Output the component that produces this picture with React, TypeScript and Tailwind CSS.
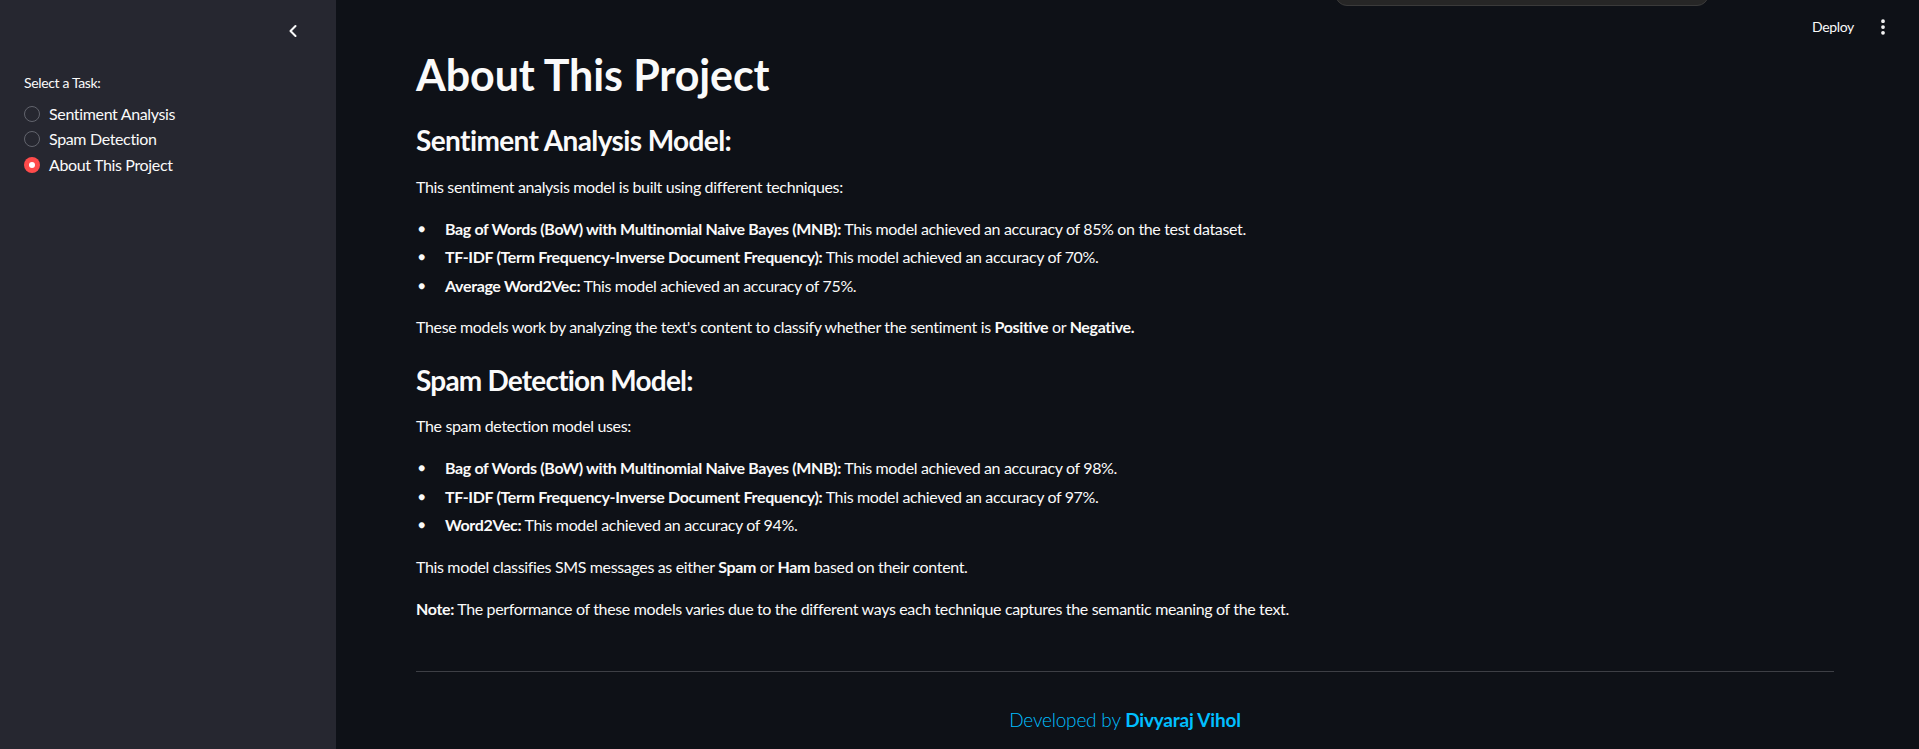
import React from "react";
import { ChevronLeft, EllipsisVertical } from "lucide-react";

const font = { fontFamily: "Lato, 'Noto Sans', sans-serif" };

function Radio({ label, checked }: { label: string; checked?: boolean }) {
  return (
    <div className="flex items-center h-[25.5px]">
      {checked ? (
        <span className="w-4 h-4 rounded-full bg-[#ff4b4b] flex items-center justify-center">
          <span className="w-[6px] h-[6px] rounded-full bg-white" />
        </span>
      ) : (
        <span className="w-4 h-4 rounded-full border border-[#62646d]" />
      )}
      <span className="ml-[9px] text-[16px] leading-[24px] text-[#fafafa]">{label}</span>
    </div>
  );
}

function Bullet({ children }: { children: React.ReactNode }) {
  return (
    <li className="flex h-[24px] leading-[24px] text-[16px]">
      <span className="w-[29px] pl-[2px] text-[12px]">●</span>
      <span>{children}</span>
    </li>
  );
}

export default function App() {
  return (
    <div className="relative flex h-[749px] w-[1919px] overflow-hidden bg-[#0e1117] text-[#fafafa] tracking-[-0.35px]" style={font}>
      <aside className="w-[336px] shrink-0 bg-[#262730] flex flex-col">
        <div className="flex justify-end pr-[33px] pt-[21px]">
          <ChevronLeft size={20} strokeWidth={2.5} className="text-[#fafafa]" />
        </div>
        <div className="pl-[24px] pt-[32px]">
          <div className="text-[14px] leading-[20px] text-[#fafafa]">Select a Task:</div>
          <div className="mt-[8px] flex flex-col">
            <Radio label="Sentiment Analysis" />
            <Radio label="Spam Detection" />
            <Radio label="About This Project" checked />
          </div>
        </div>
      </aside>

      <main className="relative flex-1 pl-[80px] pr-[85px]">
        <div className="absolute left-[999px] top-[-20px] w-[374px] h-[26px] rounded-b-[12px] bg-[#262626] border border-[#3a3a3a]" />
        <div className="absolute right-[26px] top-[17px] flex items-center">
          <span className="text-[14px] leading-[20px] text-[#fafafa]">Deploy</span>
          <EllipsisVertical size={20} strokeWidth={2.5} className="ml-[19px] text-[#fafafa]" />
        </div>

        <div className="pt-[49px]">
          <h1 className="text-[43px] leading-[51px] font-bold tracking-[-0.1px]">About This Project</h1>
          <h2 className="mt-[24px] text-[28px] leading-[33.6px] font-bold tracking-[-0.6px]">Sentiment Analysis Model:</h2>
          <p className="mt-[17px] text-[16px] leading-[24px]">This sentiment analysis model is built using different techniques:</p>
          <ul className="mt-[18px] flex flex-col gap-[4.5px]">
            <Bullet><b>Bag of Words (BoW) with Multinomial Naive Bayes (MNB):</b> This model achieved an accuracy of 85% on the test dataset.</Bullet>
            <Bullet><b>TF-IDF (Term Frequency-Inverse Document Frequency):</b> This model achieved an accuracy of 70%.</Bullet>
            <Bullet><b>Average Word2Vec:</b> This model achieved an accuracy of 75%.</Bullet>
          </ul>
          <p className="mt-[17px] text-[16px] leading-[24px]">These models work by analyzing the text's content to classify whether the sentiment is <b>Positive</b> or <b>Negative.</b></p>

          <h2 className="mt-[25px] text-[28px] leading-[33.6px] font-bold tracking-[-0.8px]">Spam Detection Model:</h2>
          <p className="mt-[17px] text-[16px] leading-[24px]">The spam detection model uses:</p>
          <ul className="mt-[18px] flex flex-col gap-[4.5px]">
            <Bullet><b>Bag of Words (BoW) with Multinomial Naive Bayes (MNB):</b> This model achieved an accuracy of 98%.</Bullet>
            <Bullet><b>TF-IDF (Term Frequency-Inverse Document Frequency):</b> This model achieved an accuracy of 97%.</Bullet>
            <Bullet><b>Word2Vec:</b> This model achieved an accuracy of 94%.</Bullet>
          </ul>
          <p className="mt-[18px] text-[16px] leading-[24px]">This model classifies SMS messages as either <b>Spam</b> or <b>Ham</b> based on their content.</p>
          <p className="mt-[18px] text-[16px] leading-[24px]"><b>Note:</b> The performance of these models varies due to the different ways each technique captures the semantic meaning of the text.</p>

          <hr className="mt-[50px] border-0 h-px bg-[#3d3f45]" />
          <div className="mt-[35px] text-center text-[19px] leading-[26px] font-light text-[#00bfff] tracking-[-0.2px]">
            Developed by <b className="font-bold">Divyaraj Vihol</b>
          </div>
        </div>
      </main>
    </div>
  );
}
